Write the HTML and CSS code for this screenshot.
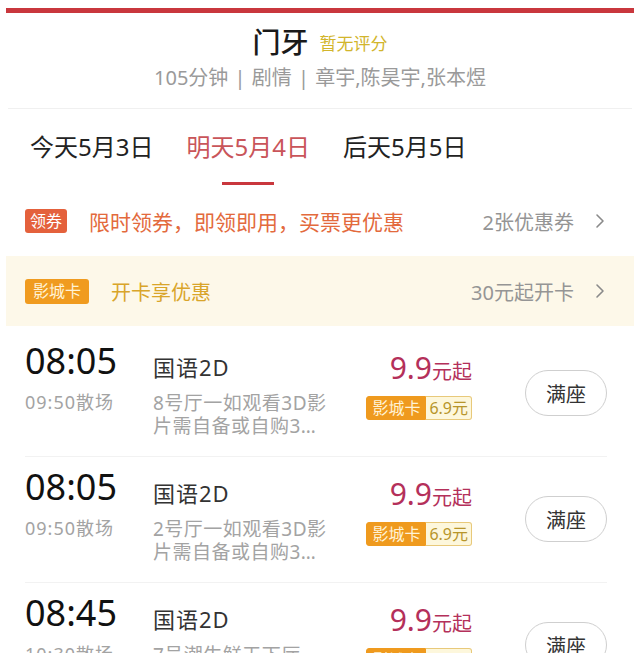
FILE: index.html
```html
<!DOCTYPE html>
<html lang="zh-CN">
<head>
  <meta charset="UTF-8">
  <title>门牙 - 选座购票</title>
  <link rel="stylesheet" href="styles.css">
</head>
<body>

<div class="topBar"></div>

<div class="movieHead">
  <div class="titleRow">
    <span class="movieTitle">门牙</span>
    <span class="score">暂无评分</span>
  </div>
  <div class="movieInfo">105分钟 | 剧情 | 章宇,陈昊宇,张本煜</div>
</div>

<div class="dateTabs">
  <div class="dateTab">今天5月3日</div>
  <div class="dateTab active">明天5月4日</div>
  <div class="dateTab">后天5月5日</div>
</div>

<div class="promoRow coupon">
  <span class="tag tagRed">领券</span>
  <span class="promoText">限时领券，即领即用，买票更优惠</span>
  <span class="promoMore">2张优惠券</span>
  <svg class="arrow" width="10" height="16" viewBox="0 0 10 16"><path d="M2 2l6 6-6 6" fill="none" stroke="#8a8a8a" stroke-width="1.6" stroke-linecap="round" stroke-linejoin="round"/></svg>
</div>

<div class="promoRow card">
  <span class="tag tagOrange">影城卡</span>
  <span class="promoText">开卡享优惠</span>
  <span class="promoMore">30元起开卡</span>
  <svg class="arrow" width="10" height="16" viewBox="0 0 10 16"><path d="M2 2l6 6-6 6" fill="none" stroke="#8a8a8a" stroke-width="1.6" stroke-linecap="round" stroke-linejoin="round"/></svg>
</div>

<div class="showList">
  <div class="show">
    <div class="timeCol">
      <div class="startTime">08:05</div>
      <div class="endTime">09:50散场</div>
    </div>
    <div class="infoCol">
      <div class="lang">国语2D</div>
      <div class="hall">8号厅一如观看3D影<br>片需自备或自购3…</div>
    </div>
    <div class="priceCol">
      <div class="price"><span class="num">9.9</span>元起</div>
      <div class="cardPrice"><span class="cardName">影城卡</span><span class="cardNum">6.9元</span></div>
    </div>
    <div class="btn">满座</div>
  </div>

  <div class="show">
    <div class="timeCol">
      <div class="startTime">08:05</div>
      <div class="endTime">09:50散场</div>
    </div>
    <div class="infoCol">
      <div class="lang">国语2D</div>
      <div class="hall">2号厅一如观看3D影<br>片需自备或自购3…</div>
    </div>
    <div class="priceCol">
      <div class="price"><span class="num">9.9</span>元起</div>
      <div class="cardPrice"><span class="cardName">影城卡</span><span class="cardNum">6.9元</span></div>
    </div>
    <div class="btn">满座</div>
  </div>

  <div class="show">
    <div class="timeCol">
      <div class="startTime">08:45</div>
      <div class="endTime">10:30散场</div>
    </div>
    <div class="infoCol">
      <div class="lang">国语2D</div>
      <div class="hall">7号潮生鲜天下厅一<br>如观看3D影片需自…</div>
    </div>
    <div class="priceCol">
      <div class="price"><span class="num">9.9</span>元起</div>
      <div class="cardPrice"><span class="cardName">影城卡</span><span class="cardNum">6.9元</span></div>
    </div>
    <div class="btn">满座</div>
  </div>
</div>

</body>
</html>
```

FILE: styles.css
```css
body {
  margin: 0;
  background-color: #fff;
  font-family: "Noto Sans", "Noto Sans CJK SC", sans-serif;
  color: #222;
  overflow: hidden;
}

.topBar {
  height: 5px;
  margin: 8px 6px 0;
  background-color: #c9373d;
}

.movieHead {
  text-align: center;
  margin: 10px 8px 0;
  padding-bottom: 16px;
  border-bottom: 1px solid #f0f0f0;
}

.titleRow {
  display: flex;
  justify-content: center;
  align-items: center;
  gap: 11px;
  height: 36px;
}

.movieTitle {
  font-size: 28px;
  font-weight: 500;
  color: #1a1a1a;
}

.score {
  font-size: 17px;
  color: #d2b52c;
  margin-top: 2px;
}

.movieInfo {
  margin-top: 5px;
  font-size: 20px;
  line-height: 28px;
  word-spacing: 1px;
  color: #9a9a9a;
}

.dateTabs {
  display: flex;
  gap: 33px;
  padding: 0 30px;
  margin-top: 22px;
}

.dateTab {
  font-size: 24px;
  line-height: 32px;
  color: #222;
  position: relative;
  padding-bottom: 22px;
}

.dateTab.active {
  color: #c9555a;
}

.dateTab.active::after {
  content: "";
  position: absolute;
  left: 50%;
  bottom: 0;
  width: 52px;
  height: 3px;
  margin-left: -26px;
  background-color: #c9373d;
}

.promoRow {
  display: flex;
  align-items: center;
  padding: 0 35px 0 25px;
}

.coupon {
  height: 44px;
  margin-top: 14px;
}

.card {
  height: 70px;
  margin: 13px 6px 0;
  padding: 0 29px 0 19px;
  background-color: #fdf8e9;
}

.tag {
  color: #fff;
  font-size: 16px;
  line-height: 24px;
  padding: 0 5px;
  border-radius: 3px;
}

.tagRed {
  background-color: #e4613c;
}

.tagOrange {
  background-color: #f09b1f;
  color: #fff3d6;
  padding: 0 8px;
  line-height: 25px;
}

.promoText {
  font-size: 20px;
  margin-left: 22px;
  flex: 1;
}

.coupon .promoText {
  font-size: 21px;
  color: #e36a3d;
}

.card .promoText {
  color: #d9a52a;
}

.promoMore {
  font-size: 20px;
  color: #959595;
}

.arrow {
  margin-left: 21px;
}

.showList {
  margin-top: 5px;
}

.show {
  display: flex;
  height: 115px;
  padding-top: 10px;
  margin: 0 33px 0 25px;
  border-bottom: 1px solid #f2f2f2;
}

.timeCol {
  width: 128px;
  flex-shrink: 0;
}

.startTime {
  font-size: 36px;
  line-height: 40px;
  color: #111;
}

.endTime {
  margin-top: 10px;
  font-size: 18px;
  line-height: 22px;
  letter-spacing: 1px;
  color: #a3a3a3;
}

.infoCol {
  width: 190px;
  flex-shrink: 0;
}

.lang {
  font-size: 22px;
  line-height: 28px;
  letter-spacing: 1px;
  margin-top: 12px;
  color: #333;
}

.hall {
  margin-top: 11px;
  font-size: 19px;
  line-height: 23px;
  letter-spacing: 0.5px;
  color: #a3a3a3;
  white-space: nowrap;
}

.priceCol {
  flex: 1;
  display: flex;
  flex-direction: column;
  align-items: flex-end;
}

.price {
  margin-top: 9px;
  font-size: 20px;
  line-height: 36px;
  color: #b4305a;
}

.price .num {
  font-size: 30px;
}

.cardPrice {
  display: flex;
  margin-top: 6px;
  font-size: 16px;
  line-height: 22px;
}

.cardName {
  background-color: #ef9a1e;
  color: #fff3d6;
  padding: 0 5px;
  border: 1px solid #ef9a1e;
  border-radius: 3px 0 0 3px;
}

.cardNum {
  background-color: #fdf7dc;
  color: #b7952a;
  padding: 0 3px;
  border: 1px solid #e8c97a;
  border-left: none;
  border-radius: 0 3px 3px 0;
}

.btn {
  flex-shrink: 0;
  margin: 29px 0 0 53px;
  width: 80px;
  height: 44px;
  border: 1px solid #cfcfcf;
  border-radius: 23px;
  display: flex;
  align-items: center;
  justify-content: center;
  font-size: 20px;
  color: #333;
}
```
